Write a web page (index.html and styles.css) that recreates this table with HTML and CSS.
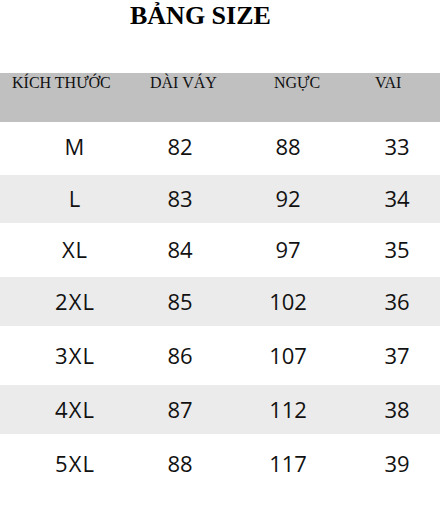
FILE: index.html
```html
<!DOCTYPE html>
<html lang="vi">
<head>
<meta charset="utf-8">
<title>Bảng size</title>
<link rel="stylesheet" href="styles.css">
</head>
<body>
<div class="page">
  <h1 class="title">BẢNG SIZE</h1>
  <div class="head">
    <span>KÍCH THƯỚC</span>
    <span>DÀI VÁY</span>
    <span>NGỰC</span>
    <span>VAI</span>
  </div>
  <div class="row first h53"><span>M</span><span>82</span><span>88</span><span>33</span></div>
  <div class="row alt h48"><span>L</span><span>83</span><span>92</span><span>34</span></div>
  <div class="row h54"><span>XL</span><span>84</span><span>97</span><span>35</span></div>
  <div class="row alt h49"><span>2XL</span><span>85</span><span>102</span><span>36</span></div>
  <div class="row h59"><span>3XL</span><span>86</span><span>107</span><span>37</span></div>
  <div class="row alt h49"><span>4XL</span><span>87</span><span>112</span><span>38</span></div>
  <div class="row h60"><span>5XL</span><span>88</span><span>117</span><span>39</span></div>
</div>
</body>
</html>
```

FILE: styles.css
```css
html, body {
  margin: 0;
  padding: 0;
  background: #fff;
}

.page {
  width: 440px;
  color: #111;
}

.title {
  margin: 1px 0 0 0;
  padding-left: 130px;
  height: 72px;
  font-family: "Liberation Serif", "Times New Roman", serif;
  font-weight: bold;
  font-size: 26px;
  line-height: 30px;
  color: #000;
}

.head {
  display: grid;
  grid-template-columns: 138px 124px 101px auto;
  padding-left: 12px;
  height: 49px;
  background: #c0c0c0;
  font-family: "Liberation Serif", "Times New Roman", serif;
  font-size: 16px;
  line-height: 20px;
  color: #111;
}

.row {
  display: grid;
  grid-template-columns: 150px 60px 156px 62px;
  align-items: center;
  box-sizing: border-box;
  padding-bottom: 2px;
  font-family: "Open Sans", "Noto Sans", sans-serif;
  font-size: 22px;
  line-height: 30px;
  color: #111;
}

.row.first {
  padding-bottom: 5px;
}

.row span {
  text-align: center;
}

.row span:first-child {
  letter-spacing: 1px;
}

.alt {
  background: #ebebeb;
}

.h48 { height: 48px; }
.h49 { height: 49px; }
.h53 { height: 53px; }
.h54 { height: 54px; }
.h59 { height: 59px; }
.h60 { height: 60px; }
```
